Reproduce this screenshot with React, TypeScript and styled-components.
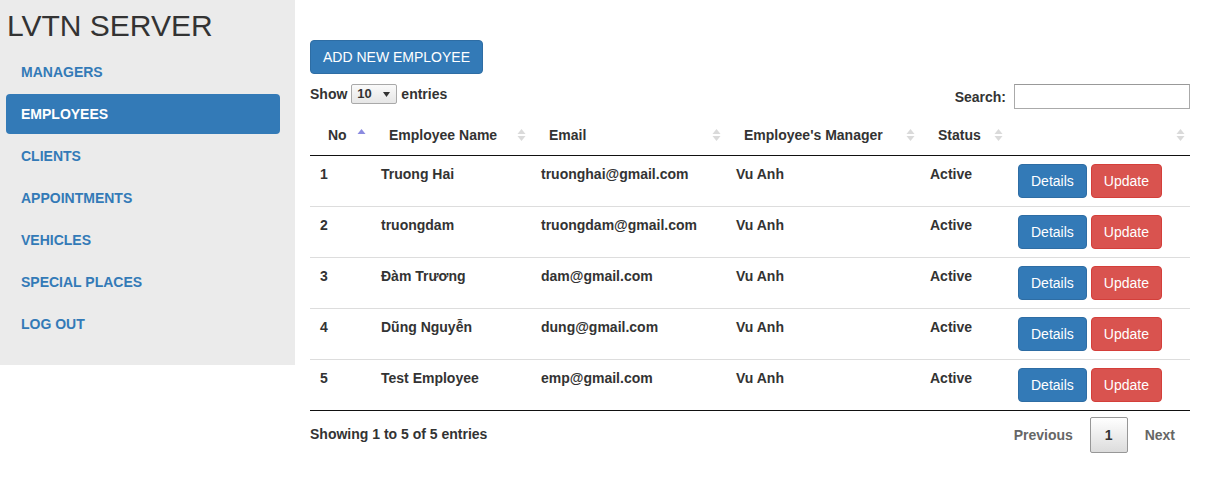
import React from 'react';
import styled, { createGlobalStyle } from 'styled-components';

const GlobalStyle = createGlobalStyle`
  body {
    margin: 0;
    font-family: "Liberation Sans", Arial, Helvetica, sans-serif;
    font-size: 14px;
    line-height: 20px;
    color: #333;
    background: #fff;
  }
  * { box-sizing: border-box; }
`;

const Page = styled.div`
  display: flex;
  align-items: flex-start;
  width: 1205px;
`;

const Sidebar = styled.aside`
  width: 295px;
  height: 365px;
  flex-shrink: 0;
  background: #ebebeb;
  padding: 0 15px 0 6px;
`;

const Brand = styled.h1`
  margin: 0;
  padding: 8px 0 0 1px;
  font-size: 30px;
  line-height: 36px;
  font-weight: normal;
  color: #333;
`;

const NavList = styled.ul`
  list-style: none;
  margin: 8px 0 0;
  padding: 0;
  display: flex;
  flex-direction: column;
  gap: 2px;
`;

const NavLink = styled.a<{ $active?: boolean }>`
  display: block;
  height: 40px;
  padding: 10px 15px;
  border-radius: 4px;
  font-weight: bold;
  text-decoration: none;
  color: ${(p) => (p.$active ? '#fff' : '#337ab7')};
  background: ${(p) => (p.$active ? '#337ab7' : 'transparent')};
`;

const Main = styled.main`
  flex: 1;
  padding: 40px 15px 0;
`;

const Btn = styled.button<{ $variant: 'primary' | 'danger' }>`
  display: inline-block;
  font-family: inherit;
  font-size: 14px;
  line-height: 20px;
  padding: 6px 12px;
  border-radius: 4px;
  color: #fff;
  cursor: pointer;
  border: 1px solid ${(p) => (p.$variant === 'primary' ? '#2e6da4' : '#d43f3a')};
  background: ${(p) => (p.$variant === 'primary' ? '#337ab7' : '#d9534f')};
`;

const Controls = styled.div`
  display: flex;
  justify-content: space-between;
  align-items: flex-start;
  margin-top: 10px;
  font-weight: bold;
`;

const LengthBox = styled.label`
  display: flex;
  align-items: center;
  gap: 4px;
  line-height: 20px;
`;

const FakeSelect = styled.span`
  display: inline-flex;
  align-items: center;
  justify-content: space-between;
  width: 46px;
  height: 20px;
  padding: 0 6px 0 5px;
  border: 1px solid #a9a9a9;
  border-radius: 2px;
  background: linear-gradient(#fafafa, #e6e6e6);
  font-size: 13px;
`;

const SearchBox = styled.label`
  display: flex;
  align-items: center;
  gap: 8px;
`;

const SearchInput = styled.input`
  width: 176px;
  height: 25px;
  border: 1px solid #aaa;
  border-top-color: #999;
  padding: 2px 4px;
  font-family: inherit;
`;

const Table = styled.table`
  width: 880px;
  margin-top: 6px;
  border-collapse: collapse;
  table-layout: fixed;
  font-weight: bold;
`;

const Th = styled.th`
  position: relative;
  text-align: left;
  padding: 10px 18px;
  border-bottom: 1px solid #111;
  white-space: nowrap;
`;

const SortMark = styled.span`
  position: absolute;
  right: 5px;
  top: 50%;
  transform: translateY(-50%);
  display: flex;
`;

const Td = styled.td`
  vertical-align: top;
  padding: 8px 10px;
  border-top: 1px solid #ddd;
  white-space: nowrap;
`;

const LastRow = styled.tr`
  td { border-bottom: 1px solid #111; }
`;

const BtnGroup = styled.div`
  display: flex;
  gap: 4px;
`;

const Footer = styled.div`
  display: flex;
  justify-content: space-between;
  align-items: flex-start;
  padding-top: 6px;
  font-weight: bold;
`;

const Info = styled.div`
  padding-top: 7px;
`;

const Pager = styled.div`
  display: flex;
  gap: 2px;
`;

const PageBtn = styled.a<{ $current?: boolean }>`
  display: inline-block;
  padding: 7px 14px;
  border-radius: 2px;
  color: ${(p) => (p.$current ? '#333' : '#666')};
  border: 1px solid ${(p) => (p.$current ? '#979797' : 'transparent')};
  background: ${(p) => (p.$current ? 'linear-gradient(#fff, #dcdcdc)' : 'transparent')};
`;

const SortIcon = ({ asc }: { asc?: boolean }) =>
  asc ? (
    <svg width="9" height="14" viewBox="0 0 9 14">
      <path d="M0.5 6 L4.5 1 L8.5 6 Z" fill="#8b8be0" />
    </svg>
  ) : (
    <svg width="9" height="14" viewBox="0 0 9 14">
      <path d="M0.5 6 L4.5 1 L8.5 6 Z" fill="#dadada" />
      <path d="M0.5 8 L4.5 13 L8.5 8 Z" fill="#dadada" />
    </svg>
  );

const navItems = ['MANAGERS', 'EMPLOYEES', 'CLIENTS', 'APPOINTMENTS', 'VEHICLES', 'SPECIAL PLACES', 'LOG OUT'];

const employees = [
  { no: 1, name: 'Truong Hai', email: 'truonghai@gmail.com' },
  { no: 2, name: 'truongdam', email: 'truongdam@gmail.com' },
  { no: 3, name: 'Đàm Trương', email: 'dam@gmail.com' },
  { no: 4, name: 'Dũng Nguyễn', email: 'dung@gmail.com' },
  { no: 5, name: 'Test Employee', email: 'emp@gmail.com' },
];

const columns = [
  { label: 'No', width: 61, asc: true },
  { label: 'Employee Name', width: 160 },
  { label: 'Email', width: 195 },
  { label: "Employee's Manager", width: 194 },
  { label: 'Status', width: 88 },
  { label: '', width: 182 },
];

export default function App() {
  return (
    <Page>
      <GlobalStyle />
      <Sidebar>
        <Brand>LVTN SERVER</Brand>
        <NavList>
          {navItems.map((item) => (
            <li key={item}>
              <NavLink $active={item === 'EMPLOYEES'}>{item}</NavLink>
            </li>
          ))}
        </NavList>
      </Sidebar>
      <Main>
        <Btn $variant="primary">ADD NEW EMPLOYEE</Btn>
        <Controls>
          <LengthBox>
            Show
            <FakeSelect>
              10
              <svg width="7" height="5" viewBox="0 0 7 5">
                <path d="M0 0 L7 0 L3.5 5 Z" fill="#333" />
              </svg>
            </FakeSelect>
            entries
          </LengthBox>
          <SearchBox>
            Search:
            <SearchInput type="search" />
          </SearchBox>
        </Controls>
        <Table>
          <colgroup>
            {columns.map((c, i) => (
              <col key={i} style={{ width: c.width }} />
            ))}
          </colgroup>
          <thead>
            <tr>
              {columns.map((c, i) => (
                <Th key={i}>
                  {c.label}
                  <SortMark>
                    <SortIcon asc={c.asc} />
                  </SortMark>
                </Th>
              ))}
            </tr>
          </thead>
          <tbody>
            {employees.map((e, i) => {
              const Row = i === employees.length - 1 ? LastRow : 'tr';
              return (
                <Row key={e.no}>
                  <Td>{e.no}</Td>
                  <Td>{e.name}</Td>
                  <Td>{e.email}</Td>
                  <Td>Vu Anh</Td>
                  <Td>Active</Td>
                  <Td>
                    <BtnGroup>
                      <Btn $variant="primary">Details</Btn>
                      <Btn $variant="danger">Update</Btn>
                    </BtnGroup>
                  </Td>
                </Row>
              );
            })}
          </tbody>
        </Table>
        <Footer>
          <Info>Showing 1 to 5 of 5 entries</Info>
          <Pager>
            <PageBtn>Previous</PageBtn>
            <PageBtn $current>1</PageBtn>
            <PageBtn>Next</PageBtn>
          </Pager>
        </Footer>
      </Main>
    </Page>
  );
}
